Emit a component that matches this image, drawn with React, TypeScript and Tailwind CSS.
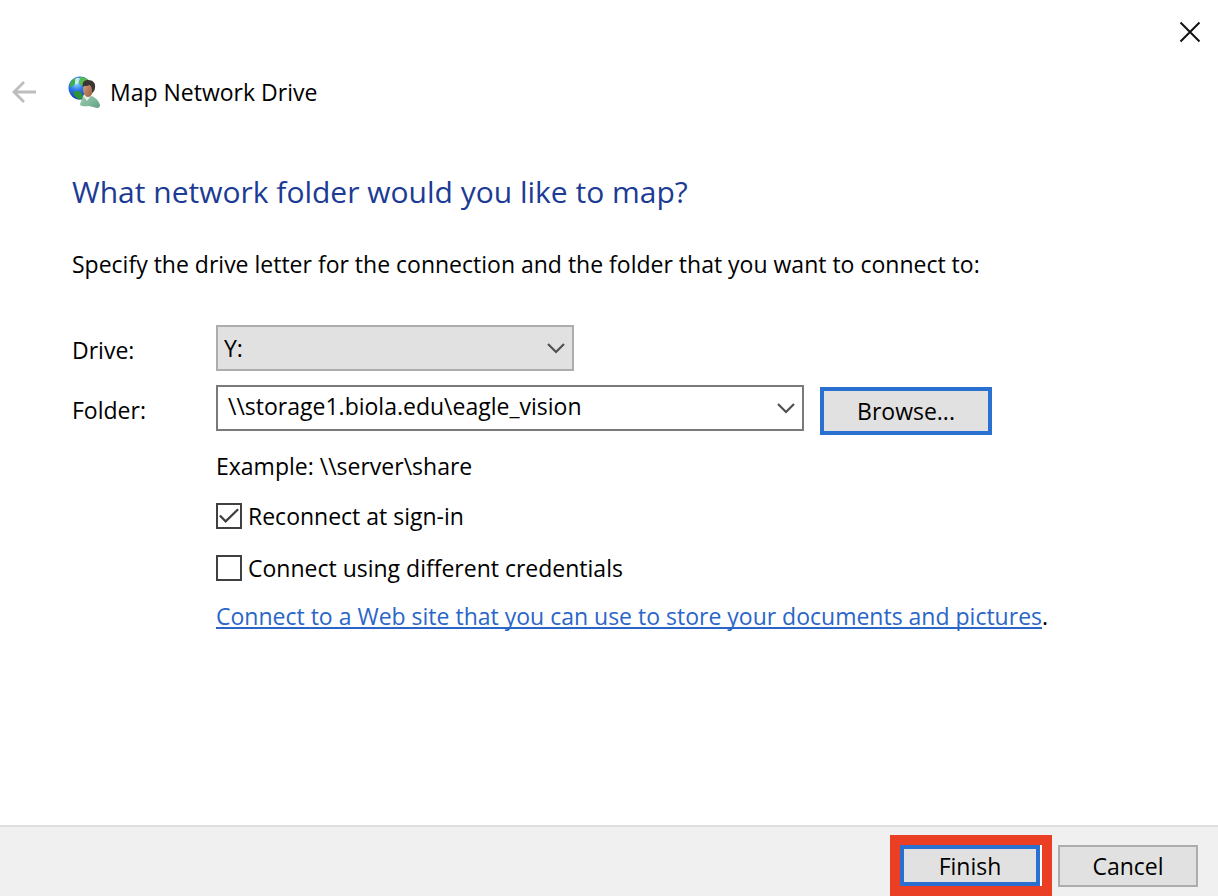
import { useState } from 'react';
import type { ReactNode } from 'react';

function ChevronIcon() {
  return (
    <svg className="w-5 h-5" viewBox="0 0 20 20" fill="none" stroke="#505050" strokeWidth={2.2}>
      <path d="M2 6l8 8 8-8" />
    </svg>
  );
}

function NetworkDriveIcon() {
  return (
    <svg className="w-8 h-8" viewBox="0 0 32 32">
      <defs>
        <radialGradient id="globe" cx="0.35" cy="0.3" r="0.75">
          <stop offset="0" stopColor="#8fdcff" />
          <stop offset="0.4" stopColor="#2f7ae8" />
          <stop offset="1" stopColor="#0b2fac" />
        </radialGradient>
        <linearGradient id="face" x1="0" y1="0" x2="1" y2="1">
          <stop offset="0" stopColor="#d9a583" />
          <stop offset="1" stopColor="#94583a" />
        </linearGradient>
        <linearGradient id="shirt" x1="0" y1="0" x2="1" y2="1">
          <stop offset="0" stopColor="#9fd0b4" />
          <stop offset="1" stopColor="#5fa183" />
        </linearGradient>
      </defs>
      <circle cx="12" cy="12" r="11.5" fill="url(#globe)" />
      <path d="M2 8c1-3 3-5 6-6.500l1 3-2 3-3 3-2 1z" fill="#3fae45" />
      <path d="M12 1c4 0 7 1 9 4l-4 1-4 4-2-3z" fill="#55bb52" />
      <path d="M7 3c2-1.500 4-1.500 5-.5l-2 5-3 1z" fill="#e2f7f0" opacity="0.8" />
      <path d="M5 16l5-1 4 2 1 5-3 1.500c-4-1-6-4-7-7.500z" fill="#2e9436" />
      <path d="M15 20c-1 4-3 6-3 9 3 2 6 1 9 1l8 2c2 0 3-1 3-3-1-4-4-7-8-9z" fill="url(#shirt)" />
      <path d="M15 20l4 5 4-5-1-3h-5z" fill="#e8eee7" />
      <ellipse cx="20" cy="13.500" rx="5" ry="7.500" fill="url(#face)" />
      <path d="M15 11c-1-5 1-7 5-7 5 0 8 3 7 8-.5 3-1.500 4-3 5 .5-4-.5-6-2-8-2 1-5 1-6 1z" fill="#3c3633" />
      <path d="M16 22l3 4 4-5 1 1-4 8h-2z" fill="#84baa0" />
    </svg>
  );
}

type CheckFieldProps = {
  id: string;
  checked: boolean;
  onChange: (checked: boolean) => void;
  children: ReactNode;
};

function CheckField({ id, checked, onChange, children }: CheckFieldProps) {
  return (
    <div className="flex items-center gap-1.5">
      <span className="relative w-[26px] h-[26px] shrink-0">
        <input
          id={id}
          type="checkbox"
          checked={checked}
          onChange={e => onChange(e.target.checked)}
          className="block w-full h-full appearance-none border-2 border-[#404040] bg-white"
        />
        {checked && (
          <svg className="absolute inset-0 w-full h-full pointer-events-none" viewBox="0 0 27 27" fill="none" stroke="#404040" strokeWidth={2.4}>
            <path d="M4 13l6 6L23 6.500" />
          </svg>
        )}
      </span>
      <label htmlFor={id}>{children}</label>
    </div>
  );
}

export default function App() {
  const [drive, setDrive] = useState('Y:');
  const [folder, setFolder] = useState('\\\\storage1.biola.edu\\eagle_vision');
  const [reconnect, setReconnect] = useState(true);
  const [otherCredentials, setOtherCredentials] = useState(false);

  return (
    <div className="min-h-screen flex flex-col bg-white text-black font-['Open_Sans','Noto_Sans',sans-serif] text-[23px] leading-8">
      <div className="flex justify-end px-4 pt-4">
        <button aria-label="Close" className="w-6 h-8 flex items-center justify-center">
          <svg className="w-6 h-6" viewBox="0 0 24 24" fill="none" stroke="#111" strokeWidth={2}>
            <path d="M2.500 2.500l19 19M21.500 2.500l-19 19" />
          </svg>
        </button>
      </div>

      <header className="flex items-center pl-3 pt-7">
        <button aria-label="Back" className="w-6 h-8 flex items-center">
          <svg className="w-6 h-6" viewBox="0 0 24 24" fill="none" stroke="#bdbdbd" strokeWidth={2.800}>
            <path d="M24 12H2M12 2L2 12l10 10" />
          </svg>
        </button>
        <span className="ml-8">
          <NetworkDriveIcon />
        </span>
        <span className="ml-2.5">Map Network Drive</span>
      </header>

      <main className="flex-1 px-18 pt-16">
        <h1 className="text-[30px] leading-10 text-[#1c3b94]">What network folder would you like to map?</h1>
        <p className="mt-9">Specify the drive letter for the connection and the folder that you want to connect to:</p>

        <div className="mt-[45px] flex items-center">
          <label htmlFor="drive" className="w-36 pt-1">Drive:</label>
          <div className="relative w-[358px]">
            <select
              id="drive"
              value={drive}
              onChange={e => setDrive(e.target.value)}
              className="block w-full h-[46px] appearance-none border-2 border-[#adadad] bg-[#e1e1e1] px-1.5"
            >
              <option>Y:</option>
              <option>Z:</option>
            </select>
            <span className="absolute right-2 inset-y-0 flex items-center pointer-events-none">
              <ChevronIcon />
            </span>
          </div>
        </div>

        <div className="mt-2.5 flex items-center">
          <label htmlFor="folder" className="w-36 pt-1">Folder:</label>
          <div className="flex w-[588px] h-[46px] border-2 border-[#7a7a7a]">
            <input
              id="folder"
              type="text"
              value={folder}
              onChange={e => setFolder(e.target.value)}
              className="flex-1 min-w-0 px-2.5 pb-1 outline-none"
            />
            <button aria-label="Show recent folders" className="w-8 flex items-center justify-center">
              <ChevronIcon />
            </button>
          </div>
          <button className="ml-4 mt-1.5 w-[172px] h-12 border-4 border-[#2a70d0] bg-[#e1e1e1] px-2">Browse...</button>
        </div>

        <div className="ml-36 mt-[15px]">
          <p>Example: \\server\share</p>
          <div className="mt-[18px] flex flex-col gap-5">
            <CheckField id="reconnect" checked={reconnect} onChange={setReconnect}>
              Reconnect at sign-in
            </CheckField>
            <CheckField id="credentials" checked={otherCredentials} onChange={setOtherCredentials}>
              Connect using different credentials
            </CheckField>
          </div>
          <p className="mt-4">
            <a href="#" className="text-[#2a66c8] underline decoration-2 underline-offset-2 [text-decoration-skip-ink:none]">
              Connect to a Web site that you can use to store your documents and pictures
            </a>
            .
          </p>
        </div>
      </main>

      <footer className="flex justify-end items-start gap-1.5 border-t-2 border-[#dfdfdf] bg-[#f0f0f0] pt-2 pr-5">
        <div className="border-10 border-[#ea3f25] bg-white pr-0.5">
          <button className="block w-[140px] h-[41px] border-4 border-[#2a70d0] bg-[#e1e1e1]">Finish</button>
        </div>
        <button className="mt-2.5 w-[140px] h-[42px] border-2 border-[#adadad] bg-[#e1e1e1]">Cancel</button>
      </footer>
    </div>
  );
}
